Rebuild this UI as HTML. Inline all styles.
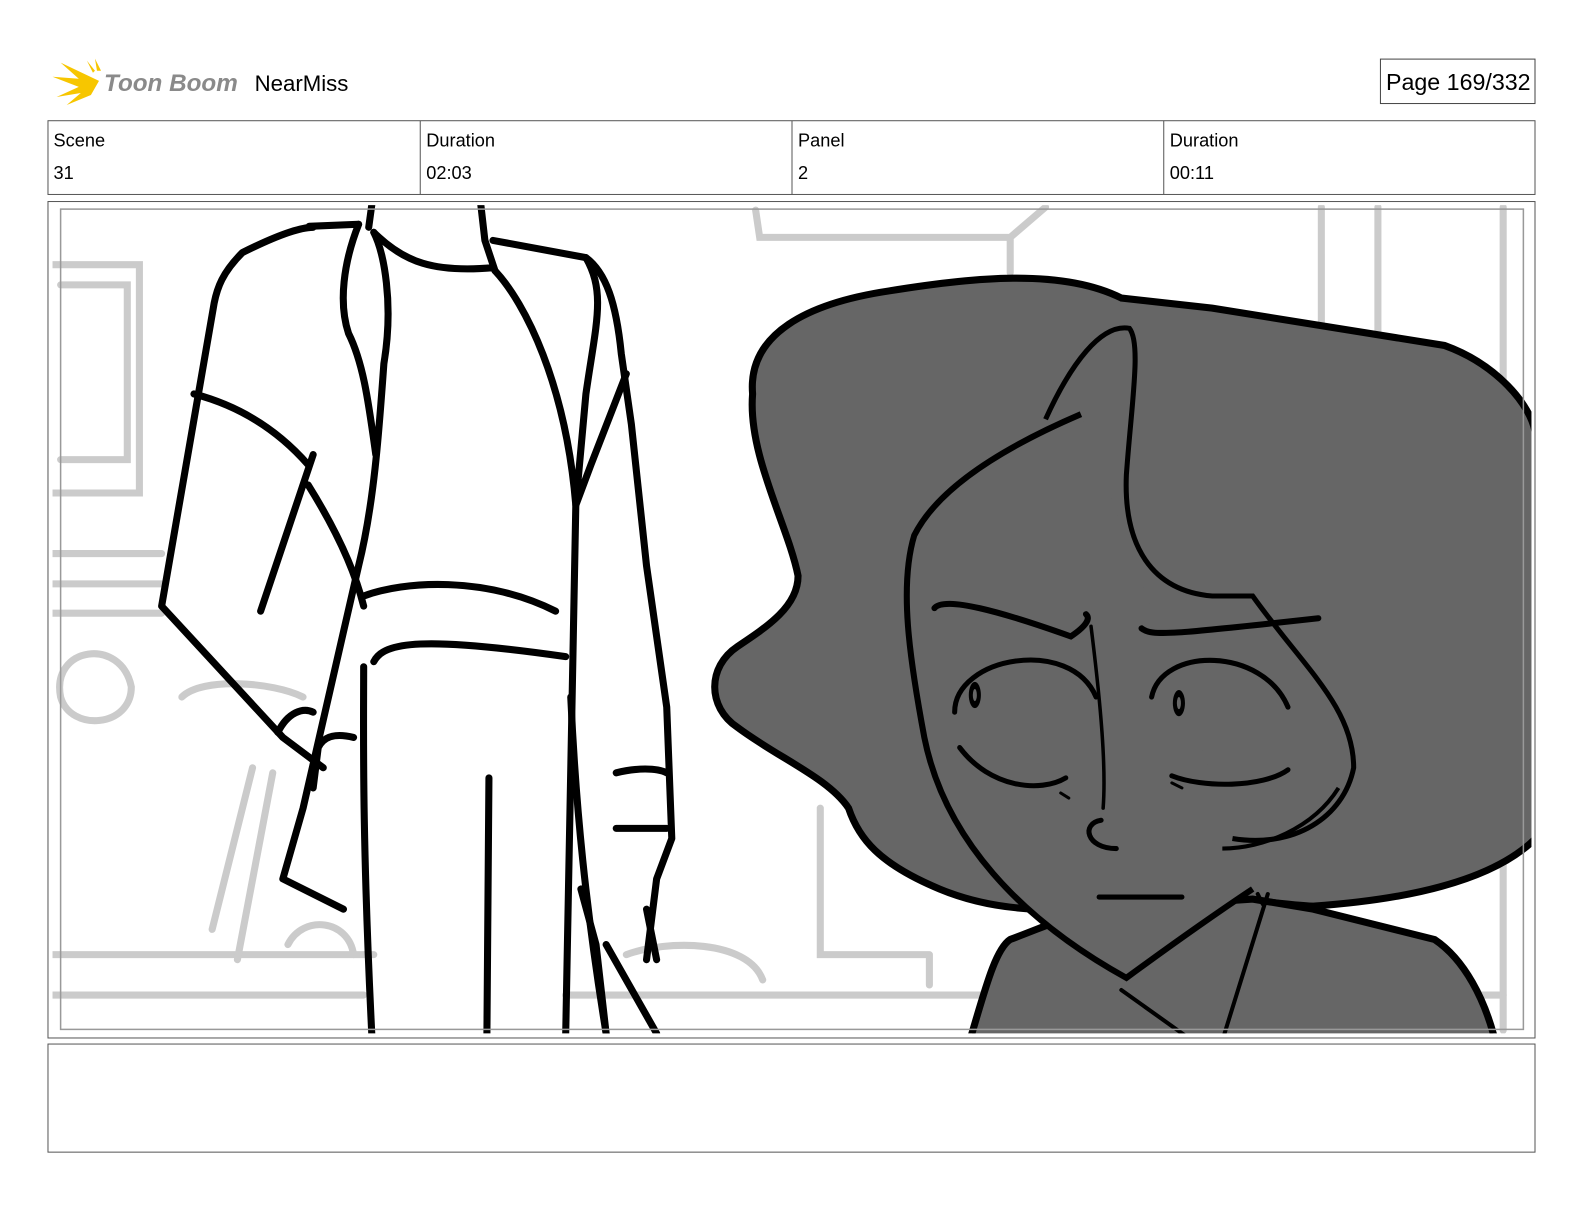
<!DOCTYPE html>
<html><head><meta charset="utf-8"><style>
html,body{margin:0;padding:0;background:#fff;width:1584px;height:1224px;overflow:hidden;font-family:"Liberation Sans","DejaVu Sans",sans-serif;}
.abs{position:absolute}
</style></head><body>
<svg class="abs" style="left:0;top:0" width="1584" height="1224" viewBox="0 0 1584 1224">
<defs><clipPath id="c"><rect x="52" y="203" width="1464" height="820"/></clipPath></defs>
<g transform="scale(1.0102)">
<g fill="#f7c600">
<path d="M98 80 L60 62 L78 78 L52 76 L78 86 L56 96 L80 92 L66 104 L90 94 Z"/>
<path d="M92 72 L86 60 L94 70 Z"/>
<path d="M96 70 L94 58 L100 70 Z"/>
</g>
<text x="103" y="90" font-family="Liberation Sans" font-weight="bold" font-style="italic" font-size="24" fill="#8a8a8a">Toon Boom</text>
<text x="252" y="90" font-family="Liberation Sans" font-size="22" fill="#000">NearMiss</text>
<rect x="1366.5" y="58.5" width="153" height="44" fill="none" stroke="#444" stroke-width="1"/>
<text x="1372" y="89" font-family="Liberation Sans" font-size="23" fill="#000">Page 169/332</text>
<rect x="47.5" y="119.5" width="1472" height="73" fill="none" stroke="#555" stroke-width="1"/>
<line x1="416" y1="119.5" x2="416" y2="192.5" stroke="#555"/>
<line x1="784" y1="119.5" x2="784" y2="192.5" stroke="#555"/>
<line x1="1152" y1="119.5" x2="1152" y2="192.5" stroke="#555"/>
<g font-family="Liberation Sans" font-size="18" fill="#000">
<text x="53" y="145">Scene</text><text x="53" y="177">31</text>
<text x="422" y="145">Duration</text><text x="422" y="177">02:03</text>
<text x="790" y="145">Panel</text><text x="790" y="177">2</text>
<text x="1158" y="145">Duration</text><text x="1158" y="177">00:11</text>
</g>
<rect x="47.5" y="199.5" width="1472" height="828" fill="none" stroke="#555"/>
<rect x="47.5" y="1033.5" width="1472" height="107" fill="none" stroke="#555"/>
<g clip-path="url(#c)">
<g fill="none" stroke="#cbcbcb" stroke-width="7" stroke-linecap="round">
<path d="M748 208 L752 235 L1000 235 L1000 270 M1000 235 L1035 205"/>
<path d="M1308 205 V320 M1364 205 V330 M1488 205 V1020"/>
<path d="M52 262 H138 V488 H52 M60 282 H126 V455 H60"/>
<path d="M52 548 H160 M52 578 H160 M52 607 H160"/>
<path d="M60 690 C50 640 120 630 130 680 C130 720 70 725 60 690"/>
<path d="M180 690 C200 670 270 675 300 690"/>
<path d="M52 945 H370 M52 985 H360 M560 985 H1488 M620 945 C660 930 740 930 755 970"/>
<path d="M250 760 L210 920 M270 765 L235 950"/>
<path d="M285 935 C300 905 345 910 350 945"/>
<path d="M812 800 V945 H920 M920 945 V975"/>
</g>
<path d="M745 390 C740 330 800 300 880 288 C960 275 1050 265 1110 295 L1200 305 L1430 342 C1480 360 1516 400 1520 430 L1520 830 C1480 870 1400 890 1300 897 C1250 895 1200 880 1130 890 C1060 905 990 905 930 880 C870 855 850 830 840 800 C820 770 770 750 730 720 C700 700 700 660 730 640 C760 620 790 600 790 570 C780 520 740 450 745 390 Z" fill="#666" stroke="#000" stroke-width="7"/>
<path d="M960 1030 C975 980 985 940 1000 930 C1040 915 1060 905 1090 900 L1240 890 L1300 900 L1420 930 C1450 950 1470 990 1480 1030 Z" fill="#666" stroke="#000" stroke-width="7"/>
<path d="M1070 410 C1000 440 930 480 905 530 C890 580 900 650 915 730 C935 830 1010 910 1115 968 C1160 935 1210 900 1240 880" fill="#666" stroke="#000" stroke-width="6"/>
<path d="M1035 415 C1060 360 1090 320 1118 325 C1130 340 1120 400 1115 470 C1112 540 1140 585 1200 590 L1240 590 C1290 660 1340 700 1340 760 C1330 810 1280 840 1220 830" fill="none" stroke="#000" stroke-width="5"/>
<path d="M1210 840 C1250 840 1300 820 1325 780" fill="none" stroke="#000" stroke-width="4"/>
<g fill="none" stroke="#000" stroke-linecap="round">
<path d="M925 602 C935 590 990 605 1060 630 C1075 620 1080 612 1075 608" stroke-width="6"/>
<path d="M1130 622 C1140 630 1160 628 1305 612" stroke-width="6"/>
<path d="M1080 620 C1090 700 1095 760 1092 800" stroke-width="3.5"/>
<path d="M945 705 C945 650 1060 630 1085 690" stroke-width="5"/>
<path d="M1140 690 C1150 640 1250 640 1275 700" stroke-width="5"/>
<path d="M950 740 C980 780 1030 785 1055 770" stroke-width="5"/>
<path d="M1160 768 C1190 780 1250 780 1275 762" stroke-width="5"/>
<path d="M1090 812 C1070 815 1075 840 1105 840" stroke-width="5"/>
<path d="M1088 888 H1170" stroke-width="5"/>
<path d="M1050 785 L1058 790 M1160 775 L1170 780" stroke-width="3"/>
<path d="M1110 980 L1180 1030 M1255 885 L1210 1030 M1245 885 L1250 895" stroke-width="4"/>
</g>
<ellipse cx="965" cy="688" rx="6" ry="13" fill="#000"/><ellipse cx="965" cy="688" rx="2" ry="6" fill="#666"/>
<ellipse cx="1167" cy="696" rx="6" ry="13" fill="#000"/><ellipse cx="1167" cy="696" rx="2" ry="6" fill="#666"/>
<g fill="none" stroke="#000" stroke-width="7" stroke-linecap="round" stroke-linejoin="round">
<path d="M306 224 L355 222 M240 250 C280 230 300 225 310 225 M240 250 C220 270 215 285 212 300 L160 600 L280 730 L320 760"/>
<path d="M355 222 C340 260 335 300 345 330 C360 360 365 400 372 450 M370 230 C380 250 390 300 380 360 C375 430 370 500 355 560 L300 800 L280 870 L340 900"/>
<path d="M368 203 L365 225 M476 203 L480 238 L490 268 M370 230 C400 260 430 270 488 265"/>
<path d="M488 238 L580 255 C600 270 610 300 615 350 L625 420 L640 560 L660 700 L665 830 L650 870 L640 950"/>
<path d="M490 268 C520 300 560 380 570 500 L560 1023"/>
<path d="M580 255 C600 290 590 320 580 390 L570 500 L585 460 L620 370"/>
<path d="M192 390 C230 400 270 420 305 460 M310 450 L258 605 M305 480 C330 520 350 560 360 600"/>
<path d="M360 590 C400 575 480 570 550 605 M370 655 C380 635 420 630 560 650"/>
<path d="M360 660 C360 720 358 820 368 1023 M484 770 L482 1023 M565 690 C570 800 580 900 600 1023"/>
<path d="M275 725 C285 705 300 700 310 705 M315 740 C320 730 330 725 350 730 M315 740 L310 780"/>
<path d="M610 765 C630 760 650 760 660 765 M610 820 L660 820 M575 880 L590 935 L600 1023 M600 935 L650 1023 M640 900 L650 950"/>
</g>
</g>
<rect x="60" y="207" width="1448" height="812" fill="none" stroke="#999" stroke-width="1.5"/>
</g>
</svg>
</body></html>
